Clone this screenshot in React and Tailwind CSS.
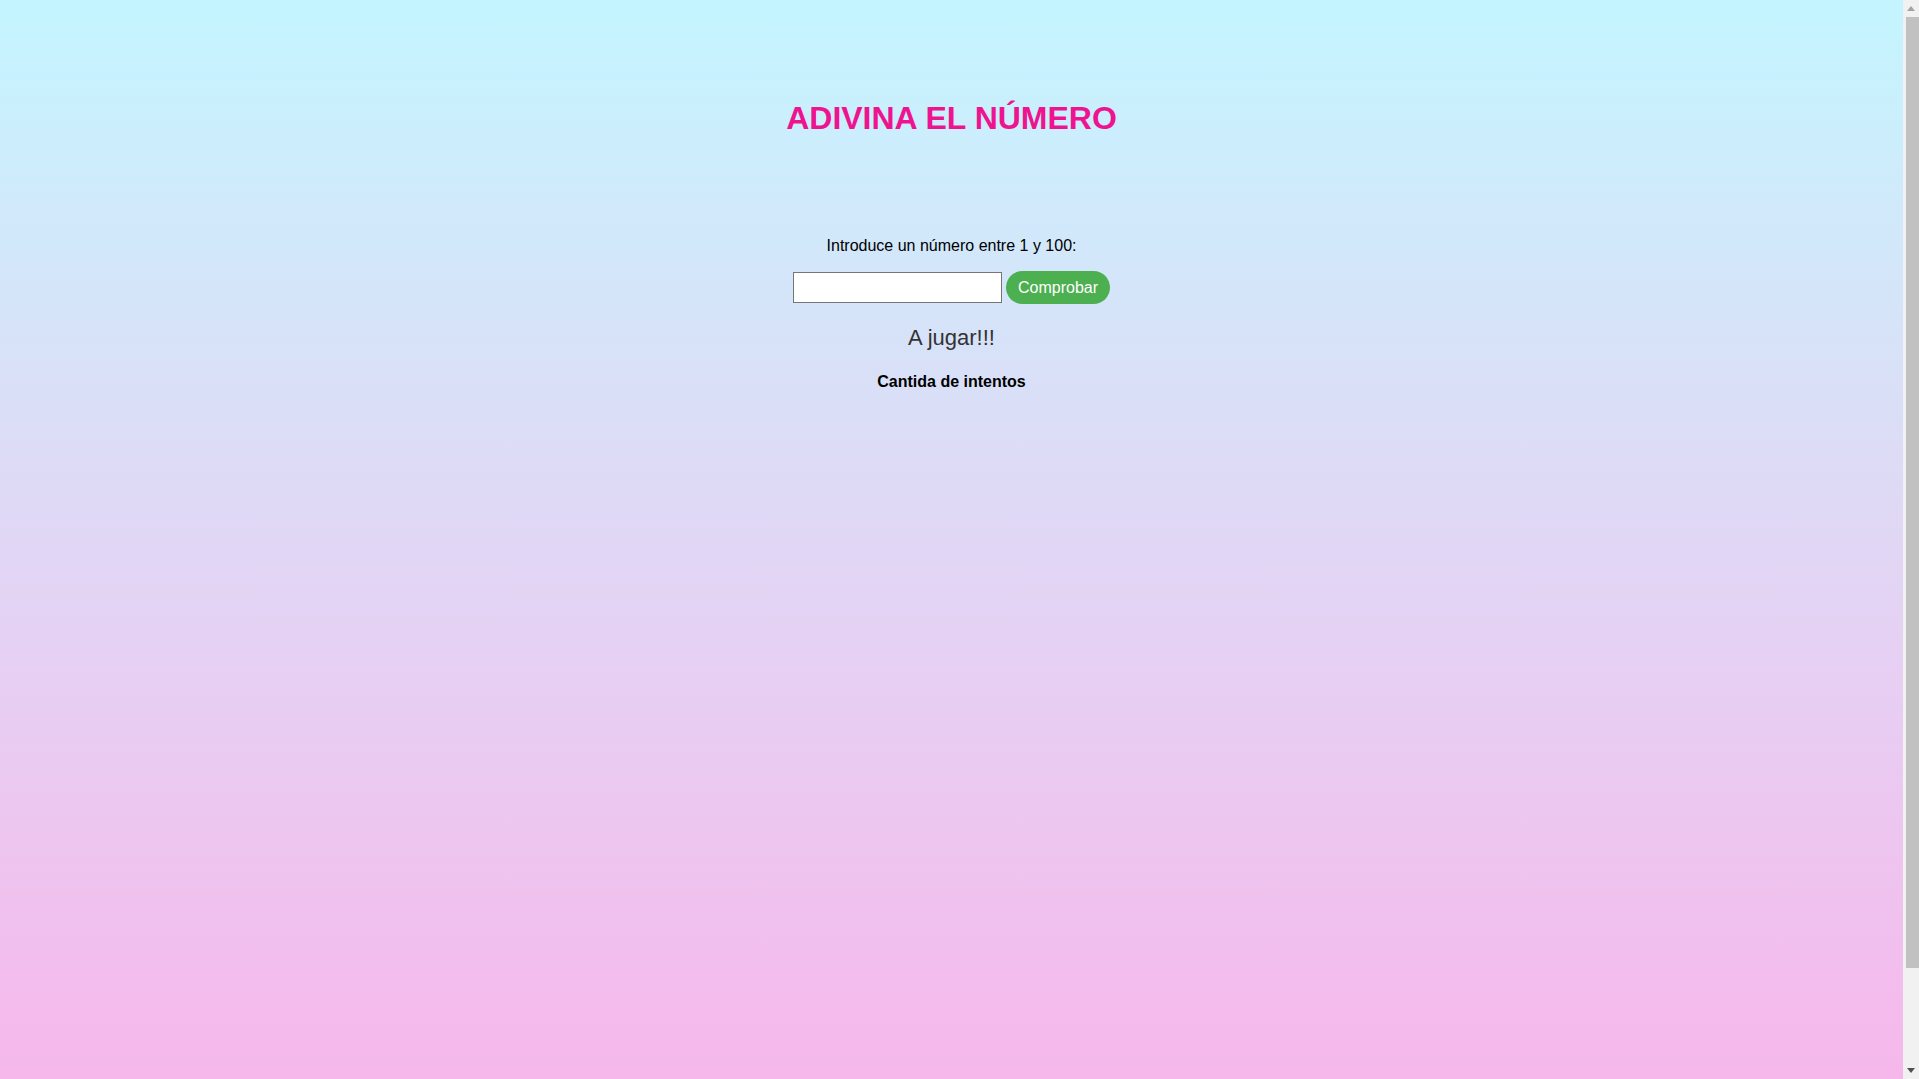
import React, { useState } from 'react';

export default function App() {
  const [value, setValue] = useState('');

  return (
    <div className="h-screen flex font-['Liberation_Sans',Arial,sans-serif] overflow-hidden">
      <div className="flex-1 bg-linear-to-b from-[#c3f5ff] to-[#f6b7eb] flex flex-col items-center">
        {/* Header */}
        <h1 className="mt-[100px] text-[32px] leading-[37px] font-bold text-[#ee148f]">
          ADIVINA EL NÚMERO
        </h1>

        {/* Game */}
        <p className="mt-[100px] text-[16px] leading-[18px] text-black">
          Introduce un número entre 1 y 100:
        </p>
        <div className="mt-[16px] flex items-center gap-[4px] h-[33px]">
          <input
            type="number"
            value={value}
            onChange={(e) => setValue(e.target.value)}
            className="w-[209px] h-[31px] bg-white border border-[#767676] px-1 text-[16px] outline-none"
          />
          <button className="h-[33px] px-[12px] rounded-full bg-[#4caf50] text-white text-[16px] leading-[18px]">
            Comprobar
          </button>
        </div>
        <p className="mt-[21px] text-[22px] leading-[25px] text-[#333333]">A jugar!!!</p>
        <p className="mt-[23px] text-[16px] leading-[18px] font-bold text-black">
          Cantida de intentos
        </p>
      </div>

      {/* Scrollbar */}
      <div className="w-[16px] bg-[#f1f1f1] flex flex-col items-center">
        <div className="h-[17px] flex items-center justify-center">
          <svg width="8" height="5" viewBox="0 0 8 5"><path d="M4 0 L8 5 L0 5 Z" fill="#a3a3a3" /></svg>
        </div>
        <div className="w-[13px] h-[951px] ml-[2px] bg-[#c1c1c1]" />
        <div className="flex-1" />
        <div className="h-[17px] flex items-center justify-center">
          <svg width="8" height="5" viewBox="0 0 8 5"><path d="M0 0 L8 0 L4 5 Z" fill="#505050" /></svg>
        </div>
      </div>
    </div>
  );
}
